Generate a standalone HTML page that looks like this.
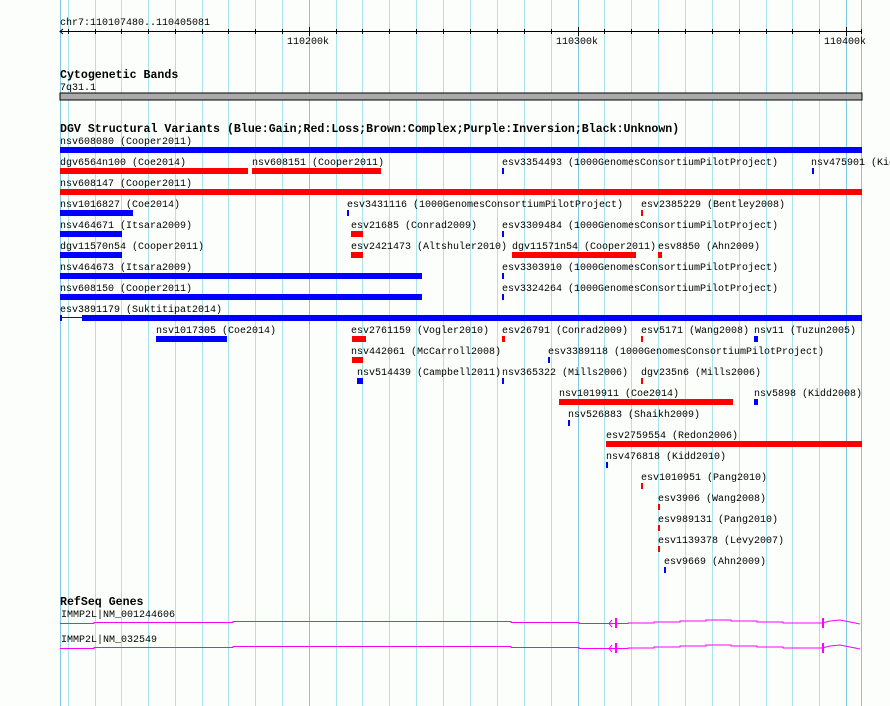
<!DOCTYPE html>
<html><head><meta charset="utf-8"><style>
html,body{margin:0;padding:0;background:#fcfefc;}
svg{display:block}
text{font-family:"Liberation Mono",monospace;font-size:10px;fill:#000}
.h{font-weight:bold;font-size:11.6px}
</style></head><body>
<svg width="890" height="706" xmlns="http://www.w3.org/2000/svg">
<g stroke="#a8e4ea" stroke-width="1">
<line x1="68.5" y1="0" x2="68.5" y2="706"/><line x1="95.5" y1="0" x2="95.5" y2="706"/><line x1="121.5" y1="0" x2="121.5" y2="706"/><line x1="148.5" y1="0" x2="148.5" y2="706"/><line x1="175.5" y1="0" x2="175.5" y2="706"/><line x1="202.5" y1="0" x2="202.5" y2="706"/><line x1="228.5" y1="0" x2="228.5" y2="706"/><line x1="255.5" y1="0" x2="255.5" y2="706"/><line x1="282.5" y1="0" x2="282.5" y2="706"/><line x1="336.5" y1="0" x2="336.5" y2="706"/><line x1="362.5" y1="0" x2="362.5" y2="706"/><line x1="389.5" y1="0" x2="389.5" y2="706"/><line x1="416.5" y1="0" x2="416.5" y2="706"/><line x1="443.5" y1="0" x2="443.5" y2="706"/><line x1="470.5" y1="0" x2="470.5" y2="706"/><line x1="497.5" y1="0" x2="497.5" y2="706"/><line x1="524.5" y1="0" x2="524.5" y2="706"/><line x1="551.5" y1="0" x2="551.5" y2="706"/><line x1="604.5" y1="0" x2="604.5" y2="706"/><line x1="631.5" y1="0" x2="631.5" y2="706"/><line x1="658.5" y1="0" x2="658.5" y2="706"/><line x1="685.5" y1="0" x2="685.5" y2="706"/><line x1="712.5" y1="0" x2="712.5" y2="706"/><line x1="739.5" y1="0" x2="739.5" y2="706"/><line x1="766.5" y1="0" x2="766.5" y2="706"/><line x1="792.5" y1="0" x2="792.5" y2="706"/><line x1="819.5" y1="0" x2="819.5" y2="706"/>
</g>
<g stroke="#80c8e0" stroke-width="1">
<line x1="60.5" y1="0" x2="60.5" y2="706"/><line x1="309.5" y1="0" x2="309.5" y2="706"/><line x1="578.5" y1="0" x2="578.5" y2="706"/><line x1="846.5" y1="0" x2="846.5" y2="706"/><line x1="861.5" y1="0" x2="861.5" y2="706"/>
</g>
<!-- ruler -->
<text x="60" y="25">chr7:110107480..110405081</text>
<line x1="60" y1="31.5" x2="862" y2="31.5" stroke="#000"/>
<path d="M63 29 L60 31.5 L63 34" fill="none" stroke="#000"/>
<g stroke="#000">
<line x1="68.5" y1="29" x2="68.5" y2="34"/><line x1="95.5" y1="29" x2="95.5" y2="34"/><line x1="121.5" y1="29" x2="121.5" y2="34"/><line x1="148.5" y1="29" x2="148.5" y2="34"/><line x1="175.5" y1="29" x2="175.5" y2="34"/><line x1="202.5" y1="29" x2="202.5" y2="34"/><line x1="228.5" y1="29" x2="228.5" y2="34"/><line x1="255.5" y1="29" x2="255.5" y2="34"/><line x1="282.5" y1="29" x2="282.5" y2="34"/><line x1="309.5" y1="27" x2="309.5" y2="36"/><line x1="336.5" y1="29" x2="336.5" y2="34"/><line x1="362.5" y1="29" x2="362.5" y2="34"/><line x1="389.5" y1="29" x2="389.5" y2="34"/><line x1="416.5" y1="29" x2="416.5" y2="34"/><line x1="443.5" y1="29" x2="443.5" y2="34"/><line x1="470.5" y1="29" x2="470.5" y2="34"/><line x1="497.5" y1="29" x2="497.5" y2="34"/><line x1="524.5" y1="29" x2="524.5" y2="34"/><line x1="551.5" y1="29" x2="551.5" y2="34"/><line x1="578.5" y1="27" x2="578.5" y2="36"/><line x1="604.5" y1="29" x2="604.5" y2="34"/><line x1="631.5" y1="29" x2="631.5" y2="34"/><line x1="658.5" y1="29" x2="658.5" y2="34"/><line x1="685.5" y1="29" x2="685.5" y2="34"/><line x1="712.5" y1="29" x2="712.5" y2="34"/><line x1="739.5" y1="29" x2="739.5" y2="34"/><line x1="766.5" y1="29" x2="766.5" y2="34"/><line x1="792.5" y1="29" x2="792.5" y2="34"/><line x1="819.5" y1="29" x2="819.5" y2="34"/><line x1="846.5" y1="27" x2="846.5" y2="36"/><line x1="861.5" y1="29" x2="861.5" y2="34"/>
</g>
<text x="287" y="44">110200k</text>
<text x="556" y="44">110300k</text>
<text x="824" y="44">110400k</text>
<!-- cytoband -->
<text class="h" x="60" y="78">Cytogenetic Bands</text>
<text x="60" y="90">7q31.1</text>
<rect x="60" y="93" width="802" height="7" fill="#aaa" stroke="#000" stroke-width="1"/>
<!-- DGV -->
<text class="h" x="60" y="132">DGV Structural Variants (Blue:Gain;Red:Loss;Brown:Complex;Purple:Inversion;Black:Unknown)</text>
<g>
<text x="60" y="144">nsv608080 (Cooper2011)</text>
<rect x="60" y="147" width="802" height="6" fill="#0000ff"/>

<text x="60" y="165">dgv6564n100 (Coe2014)</text>
<rect x="60" y="168" width="188" height="6" fill="#ff0000"/>
<text x="252" y="165">nsv608151 (Cooper2011)</text>
<rect x="252" y="168" width="129" height="6" fill="#ff0000"/>
<text x="502" y="165">esv3354493 (1000GenomesConsortiumPilotProject)</text>
<rect x="502" y="168" width="2" height="6" fill="#0000ff"/>
<text x="811" y="165">nsv475901 (Kidd2010)</text>
<rect x="812" y="168" width="2" height="6" fill="#0000ff"/>

<text x="60" y="186">nsv608147 (Cooper2011)</text>
<rect x="60" y="189" width="802" height="6" fill="#ff0000"/>

<text x="60" y="207">nsv1016827 (Coe2014)</text>
<rect x="60" y="210" width="73" height="6" fill="#0000ff"/>
<text x="347" y="207">esv3431116 (1000GenomesConsortiumPilotProject)</text>
<rect x="347" y="210" width="2" height="6" fill="#0000ff"/>
<text x="641" y="207">esv2385229 (Bentley2008)</text>
<rect x="641" y="210" width="2" height="6" fill="#ff0000"/>

<text x="60" y="228">nsv464671 (Itsara2009)</text>
<rect x="60" y="231" width="62" height="6" fill="#0000ff"/>
<text x="351" y="228">esv21685 (Conrad2009)</text>
<rect x="351" y="231" width="12" height="6" fill="#ff0000"/>
<text x="502" y="228">esv3309484 (1000GenomesConsortiumPilotProject)</text>
<rect x="502" y="231" width="2" height="6" fill="#0000ff"/>

<text x="60" y="249">dgv11570n54 (Cooper2011)</text>
<rect x="60" y="252" width="62" height="6" fill="#0000ff"/>
<text x="351" y="249">esv2421473 (Altshuler2010)</text>
<rect x="351" y="252" width="12" height="6" fill="#ff0000"/>
<text x="512" y="249">dgv11571n54 (Cooper2011)</text>
<rect x="512" y="252" width="124" height="6" fill="#ff0000"/>
<text x="658" y="249">esv8850 (Ahn2009)</text>
<rect x="658" y="252" width="4" height="6" fill="#ff0000"/>

<text x="60" y="270">nsv464673 (Itsara2009)</text>
<rect x="60" y="273" width="362" height="6" fill="#0000ff"/>
<text x="502" y="270">esv3303910 (1000GenomesConsortiumPilotProject)</text>
<rect x="502" y="273" width="2" height="6" fill="#0000ff"/>

<text x="60" y="291">nsv608150 (Cooper2011)</text>
<rect x="60" y="294" width="362" height="6" fill="#0000ff"/>
<text x="502" y="291">esv3324264 (1000GenomesConsortiumPilotProject)</text>
<rect x="502" y="294" width="2" height="6" fill="#0000ff"/>

<text x="60" y="312">esv3891179 (Suktitipat2014)</text>
<rect x="60" y="315" width="2" height="6" fill="#0000ff"/>
<rect x="60" y="317" width="22" height="1" fill="#0000ff"/>
<rect x="82" y="315" width="780" height="6" fill="#0000ff"/>

<text x="156" y="333">nsv1017305 (Coe2014)</text>
<rect x="156" y="336" width="71" height="6" fill="#0000ff"/>
<text x="351" y="333">esv2761159 (Vogler2010)</text>
<rect x="352" y="336" width="14" height="6" fill="#ff0000"/>
<text x="502" y="333">esv26791 (Conrad2009)</text>
<rect x="502" y="336" width="3" height="6" fill="#ff0000"/>
<text x="641" y="333">esv5171 (Wang2008)</text>
<rect x="641" y="336" width="2" height="6" fill="#ff0000"/>
<text x="754" y="333">nsv11 (Tuzun2005)</text>
<rect x="754" y="336" width="4" height="6" fill="#0000ff"/>

<text x="351" y="354">nsv442061 (McCarroll2008)</text>
<rect x="352" y="357" width="11" height="6" fill="#ff0000"/>
<text x="548" y="354">esv3389118 (1000GenomesConsortiumPilotProject)</text>
<rect x="548" y="357" width="2" height="6" fill="#0000ff"/>

<text x="357" y="375">nsv514439 (Campbell2011)</text>
<rect x="357" y="378" width="6" height="6" fill="#0000ff"/>
<text x="502" y="375">nsv365322 (Mills2006)</text>
<rect x="502" y="378" width="2" height="6" fill="#0000ff"/>
<text x="641" y="375">dgv235n6 (Mills2006)</text>
<rect x="641" y="378" width="2" height="6" fill="#ff0000"/>

<text x="559" y="396">nsv1019911 (Coe2014)</text>
<rect x="559" y="399" width="174" height="6" fill="#ff0000"/>
<text x="754" y="396">nsv5898 (Kidd2008)</text>
<rect x="754" y="399" width="4" height="6" fill="#0000ff"/>

<text x="568" y="417">nsv526883 (Shaikh2009)</text>
<rect x="568" y="420" width="2" height="6" fill="#0000ff"/>

<text x="606" y="438">esv2759554 (Redon2006)</text>
<rect x="606" y="441" width="256" height="6" fill="#ff0000"/>

<text x="606" y="459">nsv476818 (Kidd2010)</text>
<rect x="606" y="462" width="2" height="6" fill="#0000ff"/>

<text x="641" y="480">esv1010951 (Pang2010)</text>
<rect x="641" y="483" width="2" height="6" fill="#ff0000"/>

<text x="658" y="501">esv3906 (Wang2008)</text>
<rect x="658" y="504" width="2" height="6" fill="#ff0000"/>

<text x="658" y="522">esv989131 (Pang2010)</text>
<rect x="658" y="525" width="2" height="6" fill="#ff0000"/>

<text x="658" y="543">esv1139378 (Levy2007)</text>
<rect x="658" y="546" width="2" height="6" fill="#ff0000"/>

<text x="664" y="564">esv9669 (Ahn2009)</text>
<rect x="664" y="567" width="2" height="6" fill="#0000ff"/>
</g>
<!-- RefSeq -->
<text class="h" x="60" y="605">RefSeq Genes</text>
<text x="61" y="617">IMMP2L|NM_001244606</text>
<text x="61" y="642">IMMP2L|NM_032549</text>
<g fill="none" stroke="#ff00ff" stroke-width="1">
<path d="M60 623.5 H94 V622.5 H164 V622.5 H233 V621.5 H300 V621.5 H511 V622.5 H579 V623.5 H608 M608 623.5 H628 V623 H654 V622 H680 V621 H706 V620 H731 V621 H757 V622 H783 V623 H822 M822 623 L830 621 L840 620 L850 622 L860 624"/>
<path d="M612 620 L609 623.5 L612 627"/>
<path d="M60 648.5 H94 V647.5 H164 V647.5 H233 V646.5 H300 V646.5 H511 V647.5 H579 V648.5 H608 M608 648.5 H628 V648 H654 V647 H680 V646 H706 V645 H731 V646 H757 V647 H783 V648 H822 M822 648 L830 646 L840 645 L850 647 L860 649"/>
<path d="M612 645 L609 648.5 L612 652"/>
</g>
<g fill="#ff00ff">
<rect x="615" y="618" width="2" height="10"/><rect x="822" y="618" width="2" height="10"/>
<rect x="615" y="643" width="2" height="10"/><rect x="822" y="643" width="2" height="10"/>
</g>
</svg>
</body></html>
